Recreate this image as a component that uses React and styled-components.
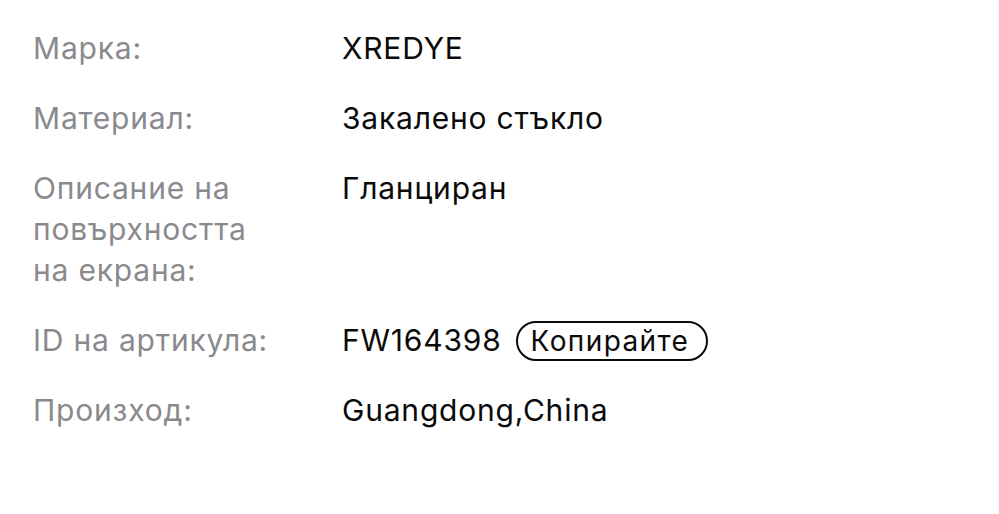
import React from 'react'
import styled, { createGlobalStyle } from 'styled-components'

const GlobalStyle = createGlobalStyle`
    body {
        margin: 0;
        background: #ffffff;
        font-family: Inter, "Noto Sans", "Liberation Sans", sans-serif;
    }
`

const specs = [
    { label: 'Марка:', value: 'XREDYE' },
    { label: 'Материал:', value: 'Закалено стъкло' },
    { label: 'Описание на повърхността на екрана:', value: 'Гланциран' },
    { label: 'ID на артикула:', value: 'FW164398', copy: true },
    { label: 'Произход:', value: 'Guangdong,China' },
]

export default function App() {
    return (
        <>
            <GlobalStyle />
            <List lang="bg">
                {specs.map((item, index) => (
                    <Row key={`spec-${index}`}>
                        <Label>{item.label}</Label>
                        <Value>
                            {item.value}
                            {item.copy && <CopyButton type="button">Копирайте</CopyButton>}
                        </Value>
                    </Row>
                ))}
            </List>
        </>
    )
}

const List = styled.div`
    display: flex;
    flex-direction: column;
    gap: 29px;
    padding: 28px 33px;
`

const Row = styled.div`
    display: grid;
    grid-template-columns: 250px 1fr;
    column-gap: 59px;
    align-items: start;
    font-size: 30px;
    letter-spacing: 0.8px;
    line-height: 41px;
`

const Label = styled.div`
    color: #8a8a8e;
`

const Value = styled.div`
    color: #0a0a0a;
    display: flex;
    align-items: center;
    gap: 14px;
`

const CopyButton = styled.button`
    font-family: inherit;
    font-size: 28px;
    letter-spacing: 1.4px;
    color: #0a0a0a;
    background: transparent;
    border: 2px solid #0a0a0a;
    border-radius: 20px;
    height: 40px;
    padding: 0 17px 0 13px;
    line-height: 1;
`
